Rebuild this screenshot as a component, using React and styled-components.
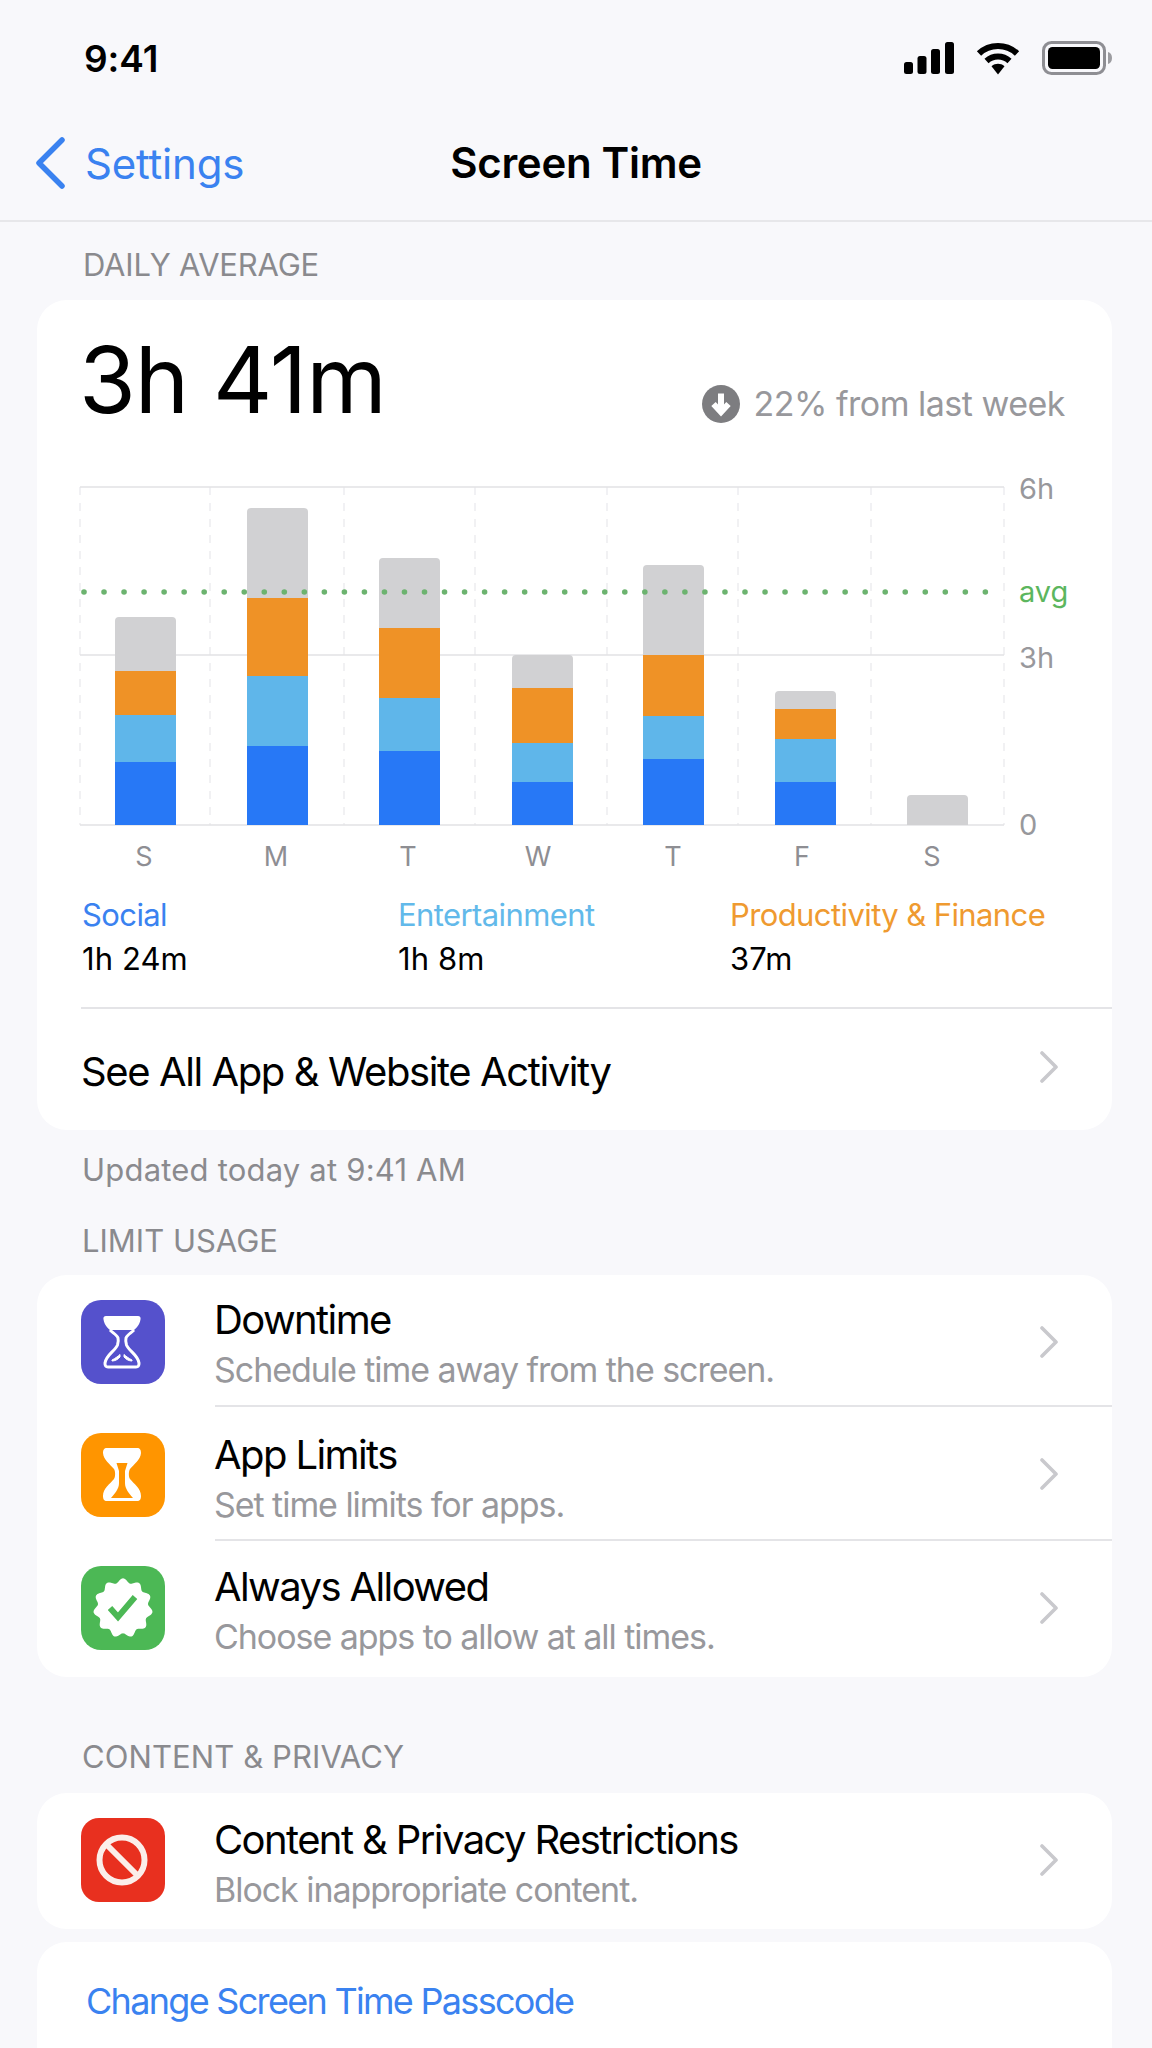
import React from 'react';
import styled, { createGlobalStyle } from 'styled-components';

const Global = createGlobalStyle`
  html, body { margin: 0; padding: 0; background: #f8f8fb; }
  * { box-sizing: border-box; }
  body { font-family: Inter, "Liberation Sans", sans-serif; -webkit-font-smoothing: antialiased; }
`;

const Page = styled.div`
  width: 1152px;
  height: 2048px;
  overflow: hidden;
  background: #f8f8fb;
  color: #000;
`;

const StatusBar = styled.div`
  height: 116px;
  padding: 0 40px 0 84px;
  display: flex;
  align-items: center;
  justify-content: space-between;
`;

const Clock = styled.div`
  font-size: 37px;
  font-weight: 600;
  letter-spacing: -0.1px;
`;

const StatusIcons = styled.div`
  display: flex;
  align-items: center;
  gap: 22px;
`;

const Nav = styled.div`
  height: 106px;
  padding: 0 35px 10px 35px;
  display: grid;
  grid-template-columns: 1fr auto 1fr;
  align-items: center;
  border-bottom: 2px solid #e7e7ea;
`;

const BackLink = styled.div`
  display: flex;
  align-items: center;
  gap: 20px;
  font-size: 42px;
  letter-spacing: -0.2px;
  color: #3a82f0;
`;

const NavTitle = styled.div`
  margin-bottom: 2px;
  font-size: 42px;
  font-weight: 600;
  letter-spacing: -0.3px;
`;

const SectionLabel = styled.div`
  margin-left: ${p => p.$left || 82}px;
  padding-top: ${p => p.$top}px;
  margin-bottom: ${p => p.$bottom}px;
  font-size: 31px;
  line-height: 36px;
  letter-spacing: ${p => p.$spacing || 0}px;
  color: #8a8a8e;
`;

const Footnote = styled.div`
  margin: 22px 0 0 82px;
  font-size: 31px;
  line-height: 36px;
  letter-spacing: 0.2px;
  color: #8a8a8e;
`;

const Card = styled.div`
  margin: 0 40px 0 37px;
  background: #fff;
  border-radius: 30px;
  overflow: hidden;
`;

const Summary = styled.div`
  height: 160px;
  padding: 0 47px 0 42px;
  display: flex;
  justify-content: space-between;
  align-items: flex-start;
`;

const BigNumber = styled.div`
  margin-top: 24px;
  font-size: 92px;
  line-height: 112px;
  letter-spacing: -1px;
`;

const Change = styled.div`
  margin-top: 82px;
  display: flex;
  align-items: center;
  gap: 14px;
  font-size: 34px;
  line-height: 44px;
  letter-spacing: -0.5px;
  color: #98989c;
`;

const ChartSvg = styled.svg`
  display: block;
  width: 1075px;
  height: 433px;
  font-family: Inter, "Liberation Sans", sans-serif;
`;

const Legend = styled.div`
  padding-left: 45px;
  display: grid;
  grid-template-columns: 316px 332px 1fr;
`;

const LegendName = styled.div`
  font-size: 31px;
  line-height: 44px;
  letter-spacing: -0.6px;
  color: ${p => p.$color};
`;

const LegendValue = styled.div`
  font-size: 31px;
  line-height: 44px;
  letter-spacing: 0.1px;
`;

const ActivityWrap = styled.div`
  margin: 26px 0 0 44px;
  height: 123px;
  padding: 3px 53px 0 0;
  border-top: 2px solid #e4e4e7;
  display: flex;
  align-items: center;
  justify-content: space-between;
  font-size: 40px;
  letter-spacing: -1.4px;

  svg {
    margin-bottom: 8px;
  }
`;

const Row = styled.div`
  height: ${p => p.$height}px;
  padding-left: 44px;
  display: grid;
  grid-template-columns: 84px 1fr;
  column-gap: 50px;
`;

const IconSlot = styled.div`
  padding-top: ${p => p.$top}px;
`;

const IconTile = styled.svg`
  display: block;
  width: 84px;
  height: 84px;
`;

const RowBody = styled.div`
  padding: ${p => p.$top}px 53px 0 0;
  display: flex;
  justify-content: space-between;
  align-items: flex-start;
  border-bottom: ${p => (p.$last ? 'none' : '2px solid #e4e4e7')};
`;

const RowText = styled.div`
  margin-left: -1px;
`;

const RowTitle = styled.div`
  font-size: 40px;
  line-height: 50px;
  letter-spacing: -1.6px;
`;

const RowSub = styled.div`
  font-size: 34px;
  line-height: 50px;
  letter-spacing: -1.05px;
  color: #98989c;
`;

const RowChevron = styled.div`
  margin-top: ${p => p.$top}px;
`;

const PasscodeCard = styled(Card)`
  margin-top: 13px;
  height: 140px;
  padding: 0 0 23px 49px;
  display: flex;
  align-items: center;
  font-size: 36px;
  letter-spacing: -1.7px;
  color: #3a82f0;
`;

const BLUE = '#2778f6', SKY = '#5fb6ea', ORANGE = '#ef9226', GRAY = '#d1d1d3';

const bars = [
  { x: 115, y: [617, 671, 715, 762] },
  { x: 247, y: [508, 598, 676, 746] },
  { x: 379, y: [558, 628, 698, 751] },
  { x: 512, y: [655, 688, 743, 782] },
  { x: 643, y: [565, 655, 716, 759] },
  { x: 775, y: [691, 709, 739, 782] },
  { x: 907, y: [795] },
];
const BASE = 825, BAR_W = 61;
const days = [['S', 144], ['M', 276], ['T', 408], ['W', 538], ['T', 673], ['F', 802], ['S', 932]];
const verticals = [80, 210, 344, 475, 607, 738, 871, 1004];
const dots = Array.from({ length: 46 }, (_, i) => 84 + i * 20.03);
const axis = [['6h', 489, '#98989c'], ['avg', 592, '#5cb65e'], ['3h', 658, '#98989c'], ['0', 825, '#98989c']];

function Chart() {
  return (
    <ChartSvg viewBox="37 460 1075 433">
      {verticals.map(x => (
        <line key={x} x1={x} x2={x} y1="487" y2="825" stroke="#ededf0" strokeWidth="1.5" strokeDasharray="8 8" />
      ))}
      {[487, 655, 825].map(y => (
        <line key={y} x1="80" x2="1004" y1={y} y2={y} stroke="#e2e2e5" strokeWidth="1.6" />
      ))}
      {bars.map(b => {
        const [g, o, s, bl] = b.y;
        return (
          <g key={b.x}>
            <path d={`M${b.x} ${BASE}V${g + 4}q0-4 4-4H${b.x + BAR_W - 4}q4 0 4 4V${BASE}Z`} fill={GRAY} />
            {o && <rect x={b.x} y={o} width={BAR_W} height={s - o} fill={ORANGE} />}
            {s && <rect x={b.x} y={s} width={BAR_W} height={bl - s} fill={SKY} />}
            {bl && <rect x={b.x} y={bl} width={BAR_W} height={BASE - bl} fill={BLUE} />}
          </g>
        );
      })}
      {dots.map(x => <circle key={x} cx={x} cy="592" r="2.8" fill="#6cb36f" />)}
      {axis.map(([t, y, c]) => (
        <text key={t} x="1019" y={y + 10} fontSize="29" fill={c}>{t}</text>
      ))}
      {days.map(([d, x], i) => (
        <text key={i} x={x} y="866" fontSize="27" fill="#8e8e93" textAnchor="middle">{d}</text>
      ))}
    </ChartSvg>
  );
}

const Chevron = () => (
  <svg width="20" height="32" viewBox="0 0 20 32" fill="none">
    <path d="M3 2l14 14L3 30" stroke="#c9c9cd" strokeWidth="3.6" strokeLinecap="round" strokeLinejoin="round" />
  </svg>
);

const Signal = () => (
  <svg width="50" height="32" viewBox="0 0 50 32">
    <rect x="0" y="20" width="9" height="12" rx="2.5" />
    <rect x="13.5" y="14" width="9" height="18" rx="2.5" />
    <rect x="27" y="7" width="9" height="25" rx="2.5" />
    <rect x="41" y="0" width="9" height="32" rx="2.5" />
  </svg>
);

const Wifi = () => (
  <svg width="44" height="33" viewBox="0 0 44 33" fill="none">
    <path d="M3 11.5C13.5 1.5 30.5 1.5 41 11.5" stroke="#000" strokeWidth="6.2" />
    <path d="M10.5 19C17 13 27 13 33.5 19" stroke="#000" strokeWidth="6" />
    <path d="M15.5 24.2C19.5 21 24.5 21 28.5 24.2L22 32.5Z" fill="#000" />
  </svg>
);

const Battery = () => (
  <svg width="70" height="34" viewBox="0 0 70 34">
    <rect x="1.5" y="1.5" width="61" height="31" rx="8" fill="none" stroke="#8e8e93" strokeWidth="3" />
    <rect x="6" y="6" width="52" height="22" rx="4.5" />
    <path d="M66 11c2.5.5 4 3 4 6s-1.500 5.500-4 6Z" fill="#9c9ca0" />
  </svg>
);

const DownBadge = () => (
  <svg width="38" height="38" viewBox="0 0 38 38">
    <circle cx="19" cy="19" r="19" fill="#7d7d80" />
    <path d="M19 8.500v17M11.500 19L19 27l7.500-8" fill="none" stroke="#fff" strokeWidth="6" strokeLinecap="butt" strokeLinejoin="miter" />
  </svg>
);

const DowntimeIcon = () => (
  <IconTile viewBox="0 0 84 84">
    <rect width="84" height="84" rx="20" fill="#5551cc" />
    <path d="M25 16H57C59 16 60 17.500 59.500 19.500C58.500 25 55.500 28 53 30H29C26.500 28 23.500 25 22.500 19.500C22 17.500 23 16 25 16Z" fill="#fff" />
    <path d="M29 30C32 33 36 35 37 38C37.500 40 37.500 42 36.500 45C34 51 25 55 24 63C23.800 66 25 67 27 67H55C57 67 58.200 66 58 63C57 55 48 51 45.500 45C44.500 42 44.500 40 45 38C46 35 50 33 53 30" fill="none" stroke="#fff" strokeWidth="3" />
    <path d="M31 60C35 58 37 56 39 54.500V57C37 59.500 34 61 31 61ZM51 60C47 58 45 56 43 54.500V57C45 59.500 48 61 51 61Z" fill="#fff" stroke="#fff" strokeWidth="1" />
  </IconTile>
);

const LimitsIcon = () => (
  <IconTile viewBox="0 0 84 84">
    <rect width="84" height="84" rx="20" fill="#ff9500" />
    <path d="M26 15H56C59 15 60 17 60 20C59.500 27 53 31 49 36C47.500 38 47.500 44 49 46C53 51 60 55 60 63C60 66 59 68 56 68H26C23 68 22 66 22 63C22 55 29 51 33 46C34.500 44 34.500 38 33 36C29 31 22.500 27 22 20C22 17 23 15 26 15Z" fill="#fff" />
    <path d="M35.500 30H46.500L44 38V50C44 56 48 60 52 65H30C34 60 38 56 38 50V38Z" fill="#ff9500" />
  </IconTile>
);

const scallop = () => {
  const pts = [];
  for (let i = 0; i < 240; i++) {
    const t = (i / 240) * Math.PI * 2;
    const r = 27.5 + 2.2 * Math.cos(11 * t - Math.PI / 2);
    pts.push(`${(42 + r * Math.cos(t)).toFixed(2)},${(42 + r * Math.sin(t)).toFixed(2)}`);
  }
  return pts.join(' ');
};

const AllowedIcon = () => (
  <IconTile viewBox="0 0 84 84">
    <rect width="84" height="84" rx="20" fill="#4cb855" />
    <polygon points={scallop()} fill="#fff" />
    <path d="M29 42L37 51L54 31" fill="none" stroke="#4cb855" strokeWidth="6" />
  </IconTile>
);

const RestrictIcon = () => (
  <IconTile viewBox="0 0 84 84">
    <rect width="84" height="84" rx="18" fill="#e8301f" />
    <circle cx="41" cy="42" r="22.500" fill="none" stroke="#fbeeea" strokeWidth="6" />
    <path d="M25 26L57 58" stroke="#fbeeea" strokeWidth="6" />
  </IconTile>
);

const limitRows = [
  { icon: <DowntimeIcon />, title: 'Downtime', sub: 'Schedule time away from the screen.', height: 132, iconTop: 25, textTop: 20, chevTop: 31 },
  { icon: <LimitsIcon />, title: 'App Limits', sub: 'Set time limits for apps.', height: 134, iconTop: 26, textTop: 23, chevTop: 28 },
  { icon: <AllowedIcon />, title: 'Always Allowed', sub: 'Choose apps to allow at all times.', height: 136, iconTop: 25, textTop: 21, chevTop: 30, last: true },
];

const ListRow = ({ icon, title, sub, height, iconTop, textTop, chevTop, last }) => (
  <Row $height={height}>
    <IconSlot $top={iconTop}>{icon}</IconSlot>
    <RowBody $last={last} $top={textTop}>
      <RowText>
        <RowTitle>{title}</RowTitle>
        <RowSub>{sub}</RowSub>
      </RowText>
      <RowChevron $top={chevTop}><Chevron /></RowChevron>
    </RowBody>
  </Row>
);

export default function App() {
  return (
    <Page>
      <Global />
      <StatusBar>
        <Clock>9:41</Clock>
        <StatusIcons>
          <Signal />
          <Wifi />
          <Battery />
        </StatusIcons>
      </StatusBar>
      <Nav>
        <BackLink>
          <svg width="30" height="52" viewBox="0 0 30 52" fill="none">
            <path d="M27 3L4 26L27 49" stroke="#3a82f0" strokeWidth="5.500" strokeLinecap="round" strokeLinejoin="round" />
          </svg>
          Settings
        </BackLink>
        <NavTitle>Screen Time</NavTitle>
        <div />
      </Nav>

      <SectionLabel $top={25} $bottom={17} $left={83} $spacing={-0.2}>DAILY AVERAGE</SectionLabel>
      <Card>
        <Summary>
          <BigNumber>3h 41m</BigNumber>
          <Change><DownBadge />22% from last week</Change>
        </Summary>
        <Chart />
        <Legend>
          <div><LegendName $color="#3a82f0">Social</LegendName><LegendValue>1h 24m</LegendValue></div>
          <div><LegendName $color="#62b9ea">Entertainment</LegendName><LegendValue>1h 8m</LegendValue></div>
          <div><LegendName $color="#ef9a30">Productivity &amp; Finance</LegendName><LegendValue>37m</LegendValue></div>
        </Legend>
        <ActivityWrap>
          See All App &amp; Website Activity
          <Chevron />
        </ActivityWrap>
      </Card>
      <Footnote>Updated today at 9:41 AM</Footnote>

      <SectionLabel $top={35} $bottom={16}>LIMIT USAGE</SectionLabel>
      <Card>
        {limitRows.map(r => <ListRow key={r.title} {...r} />)}
      </Card>

      <SectionLabel $top={62} $bottom={18} $spacing={0.1}>CONTENT &amp; PRIVACY</SectionLabel>
      <Card>
        <ListRow icon={<RestrictIcon />} title="Content & Privacy Restrictions" sub="Block inappropriate content." height={136} iconTop={25} textTop={22} chevTop={29} last />
      </Card>
      <PasscodeCard>Change Screen Time Passcode</PasscodeCard>
    </Page>
  );
}
